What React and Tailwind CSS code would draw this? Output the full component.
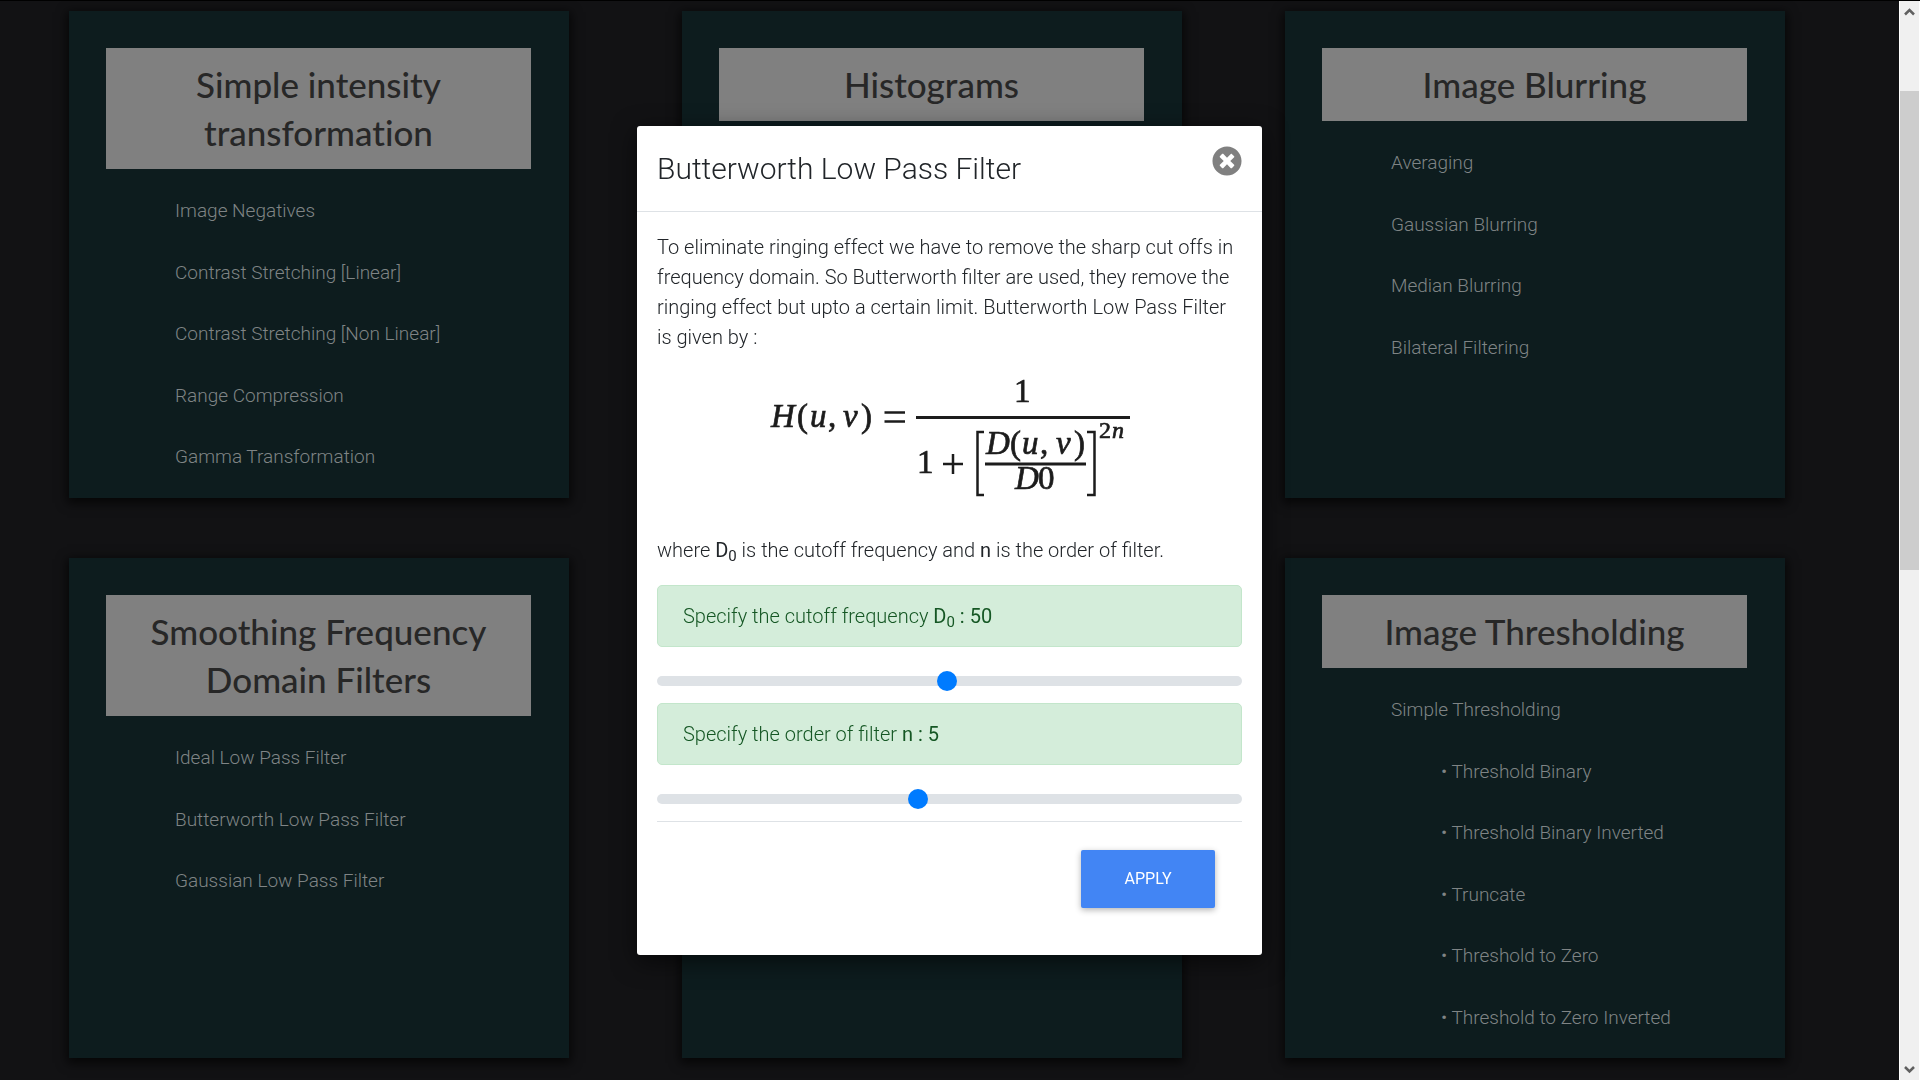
import { useState } from "react";
import { FaTimesCircle } from "react-icons/fa";

const topRow = [
  {
    title: "Simple intensity transformation",
    links: [
      "Image Negatives",
      "Contrast Stretching [Linear]",
      "Contrast Stretching [Non Linear]",
      "Range Compression",
      "Gamma Transformation",
    ],
  },
  { title: "Histograms", links: [] },
  {
    title: "Image Blurring",
    links: ["Averaging", "Gaussian Blurring", "Median Blurring", "Bilateral Filtering"],
  },
];

const bottomRow = [
  {
    title: "Smoothing Frequency Domain Filters",
    links: ["Ideal Low Pass Filter", "Butterworth Low Pass Filter", "Gaussian Low Pass Filter"],
  },
  { title: "", links: [] },
  {
    title: "Image Thresholding",
    links: ["Simple Thresholding"],
    sub: [
      "Threshold Binary",
      "Threshold Binary Inverted",
      "Truncate",
      "Threshold to Zero",
      "Threshold to Zero Inverted",
    ],
  },
];

function Card({ title, links, sub = [] }) {
  return (
    <section className="min-w-0 flex-1 bg-[#0d1c1e] py-[37px] pr-[38px] pl-[37px] shadow-[0_3px_10px_2px_rgba(0,0,0,0.7)]">
      {title && (
        <h2 className="bg-[#808080] px-6 pt-3 pb-[13px] text-center font-['Lato',sans-serif] text-[35px] leading-[48px] font-medium text-[#272727] [font-variant-ligatures:none]">
          {title}
        </h2>
      )}
      <ul className="mt-3 pl-[69px] text-[19px] font-light text-[#7f8485]">
        {links.map((label) => (
          <li key={label} className="flex h-[61px] items-center even:h-[62px]">
            <a href="#">{label}</a>
          </li>
        ))}
        {sub.map((label) => (
          <li key={label} className="flex h-[61px] items-center pl-[50px] even:h-[62px]">
            <a href="#">• {label}</a>
          </li>
        ))}
      </ul>
    </section>
  );
}

function CardRow({ cards, className }) {
  return (
    <div className={className}>
      <Card {...cards[0]} />
      <div className="w-[113px]" />
      <Card {...cards[1]} />
      <div className="w-[103px]" />
      <Card {...cards[2]} />
    </div>
  );
}

function Formula() {
  return (
    <svg
      viewBox="766 372 368 131"
      className="mx-auto mt-5 mb-8 h-[131px] w-[368px]"
      role="img"
      aria-label="Butterworth low pass filter transfer function"
      fill="#1c1c1c"
      stroke="#1c1c1c"
      strokeWidth="0.7"
      fontFamily="'Liberation Serif', serif"
      fontSize="33"
    >
      <g fontStyle="italic">
        <text x="771" y="427">H</text>
        <text x="810" y="427">u</text>
        <text x="843" y="427">v</text>
        <text x="986" y="454">D</text>
        <text x="1022" y="454">u</text>
        <text x="1056" y="454">v</text>
        <text x="1015" y="489">D</text>
        <text x="1112" y="438" fontSize="24">n</text>
      </g>
      <text x="797" y="427">(</text>
      <text x="828" y="427">,</text>
      <text x="861" y="427">)</text>
      <text x="1014" y="402">1</text>
      <text x="917" y="473">1</text>
      <text x="1010" y="454">(</text>
      <text x="1040" y="454">,</text>
      <text x="1074" y="454">)</text>
      <text x="1038" y="489">0</text>
      <text x="1099" y="438" fontSize="24">2</text>
      <g fill="none" strokeWidth="2.5">
        <path d="M884.500 412.500H905M884.500 421.500H905" />
        <path d="M916 417.500H1130M985 464H1086" strokeWidth="3" />
        <path d="M943 464H963M953 454V474" />
        <path d="M984 432H977.500V495H984M1087 432H1094.500V495H1087" />
      </g>
    </svg>
  );
}

function Slider({ id, label, min, max, value, onChange }) {
  return (
    <>
      <label
        htmlFor={id}
        className="mb-5 block rounded-[5px] border border-[#c3e6cb] bg-[#d4edda] px-[25px] py-[15px] text-[#155724]"
      >
        {label}
        <span className="font-normal"> : {value}</span>
      </label>
      <input
        id={id}
        type="range"
        min={min}
        max={max}
        value={value}
        onChange={(e) => onChange(Number(e.target.value))}
        className="mb-2 block h-7 w-full appearance-none bg-transparent [&::-webkit-slider-runnable-track]:h-[10px] [&::-webkit-slider-runnable-track]:rounded-full [&::-webkit-slider-runnable-track]:bg-[#dee2e6] [&::-webkit-slider-thumb]:-mt-[5px] [&::-webkit-slider-thumb]:h-5 [&::-webkit-slider-thumb]:w-5 [&::-webkit-slider-thumb]:appearance-none [&::-webkit-slider-thumb]:rounded-full [&::-webkit-slider-thumb]:bg-[#007bff]"
      />
    </>
  );
}

function Subscripted() {
  return (
    <span className="font-normal">
      D<sub className="text-[15px]">0</sub>
    </span>
  );
}

function FilterDialog() {
  const [cutoff, setCutoff] = useState(50);
  const [order, setOrder] = useState(5);
  return (
    <div className="fixed inset-0 flex items-start justify-center pt-[126px] pr-[21px]">
      <div
        role="dialog"
        aria-labelledby="dialog-title"
        className="w-full max-w-[625px] rounded-[3px] bg-white text-[20px] leading-[30px] font-light text-[#212529] shadow-[0_6px_25px_rgba(0,0,0,0.6)]"
      >
        <header className="flex items-start justify-between border-b border-[#dee2e6] p-5">
          <h4 id="dialog-title" className="text-[30px] leading-[45px]">
            Butterworth Low Pass Filter
          </h4>
          <button type="button" aria-label="Close" className="text-[30px] text-[#808080]">
            <FaTimesCircle />
          </button>
        </header>
        <div className="px-5 pt-5 pb-[47px]">
          <p>
            To eliminate ringing effect we have to remove the sharp cut offs in frequency domain. So
            Butterworth filter are used, they remove the ringing effect but upto a certain limit.
            Butterworth Low Pass Filter is given by :
          </p>
          <Formula />
          <p className="mb-5">
            where <Subscripted /> is the cutoff frequency and <span className="font-normal">n</span>{" "}
            is the order of filter.
          </p>
          <Slider
            id="cutoff"
            min={1}
            max={100}
            value={cutoff}
            onChange={setCutoff}
            label={
              <>
                Specify the cutoff frequency <Subscripted />
              </>
            }
          />
          <Slider
            id="order"
            min={1}
            max={10}
            value={order}
            onChange={setOrder}
            label={
              <>
                Specify the order of filter <span className="font-normal">n</span>
              </>
            }
          />
          <footer className="flex justify-end border-t border-[#dee2e6] pt-7 pr-[27px]">
            <button
              type="button"
              className="h-[58px] w-[134px] rounded-[2px] bg-[#4285f4] text-base font-normal text-white uppercase shadow-[0_2px_6px_rgba(0,0,0,0.3)]"
            >
              Apply
            </button>
          </footer>
        </div>
      </div>
    </div>
  );
}

function ScrollBar() {
  return (
    <div
      aria-hidden="true"
      className="flex w-[21px] flex-col items-center border-x border-white bg-[#f0f0f0] text-[#606060]"
    >
      <svg viewBox="0 0 19 21" className="h-[21px] w-[19px]" fill="none" stroke="currentColor" strokeWidth="2.500">
        <path d="M5 13.500L9.500 9L14 13.500" />
      </svg>
      <div className="h-[69px]" />
      <div className="h-[479px] w-full bg-[#cdcdcd]" />
      <div className="flex-1" />
      <svg viewBox="0 0 19 21" className="h-[21px] w-[19px]" fill="none" stroke="currentColor" strokeWidth="2.500">
        <path d="M5 8L9.500 12.500L14 8" />
      </svg>
    </div>
  );
}

export default function App() {
  return (
    <div className="flex h-screen overflow-hidden border-t border-black bg-[#121214] font-['Roboto',sans-serif]">
      <main className="min-w-0 flex-1 pt-[10px] pr-[114px] pl-[69px]">
        <CardRow cards={topRow} className="mb-[60px] flex h-[487px]" />
        <CardRow cards={bottomRow} className="flex h-[500px]" />
      </main>
      <ScrollBar />
      <FilterDialog />
    </div>
  );
}
